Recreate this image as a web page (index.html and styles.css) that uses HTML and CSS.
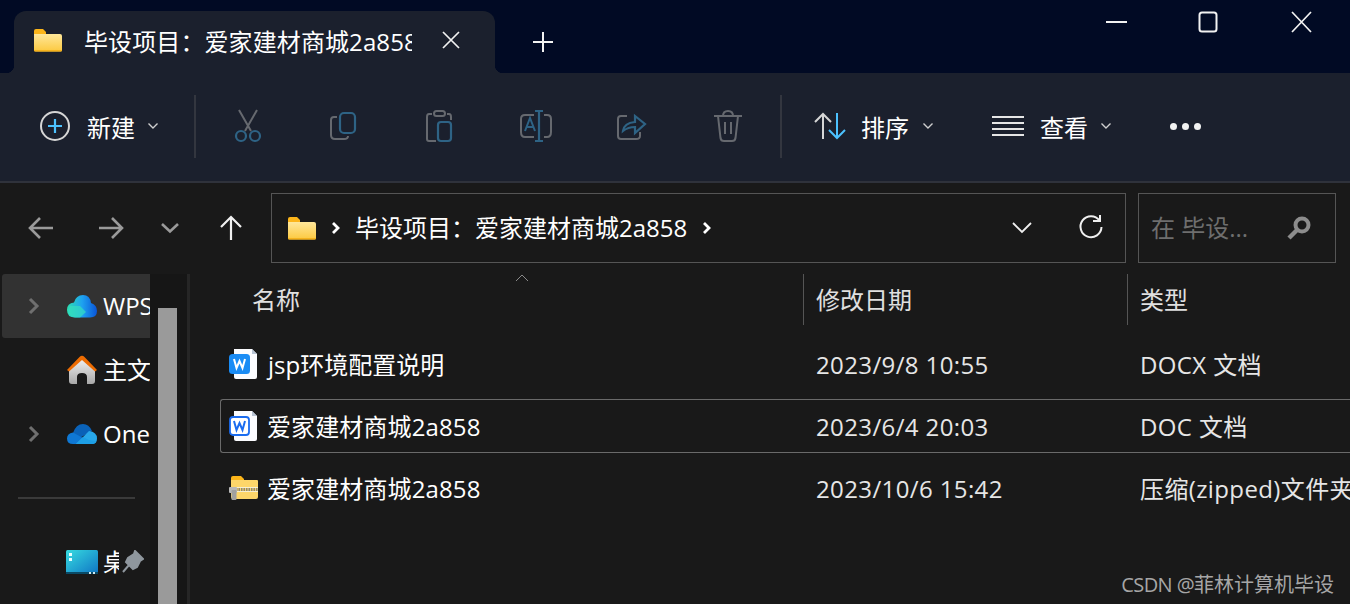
FILE: index.html
```html
<!DOCTYPE html>
<html lang="zh-CN">
<head>
<meta charset="utf-8">
<title>毕设项目</title>
<link rel="stylesheet" href="styles.css">
</head>
<body>
<div class="window">
  <header class="titlebar">
    <div class="tab">
      <svg class="tab-folder" width="30" height="24" viewBox="0 0 30 24"><use href="#folder"/></svg>
      <span class="tab-title">毕设项目：爱家建材商城2a858</span>
      <svg class="tab-close" width="20" height="20" viewBox="0 0 20 20"><path d="M2 2L18 18M18 2L2 18" stroke="#f2f2f2" stroke-width="1.7" fill="none"/></svg>
    </div>
    <svg class="tab-new" width="22" height="22" viewBox="0 0 22 22"><path d="M11 1V21M1 11H21" stroke="#f2f2f2" stroke-width="2" fill="none"/></svg>
    <div class="win-controls">
      <svg width="22" height="22" viewBox="0 0 22 22"><path d="M1 11H22" stroke="#f2f2f2" stroke-width="2"/></svg>
      <svg width="20" height="22" viewBox="0 0 20 22"><rect x="1.5" y="1.5" width="17" height="19" rx="2.5" stroke="#f2f2f2" stroke-width="2" fill="none"/></svg>
      <svg class="win-close" width="22" height="22" viewBox="0 0 22 22"><path d="M2 1L21 21M21 1L2 21" stroke="#f2f2f2" stroke-width="1.7" fill="none"/></svg>
    </div>
  </header>

  <div class="toolbar">
    <div class="tb-new">
      <svg width="32" height="32" viewBox="0 0 32 32"><circle cx="15" cy="16" r="14" stroke="#d6d6d6" stroke-width="2" fill="none"/><path d="M15 9V23M8 16H22" stroke="#4cc2ff" stroke-width="2.2"/></svg>
      <span class="tb-label">新建</span>
      <svg class="chev" width="12" height="8" viewBox="0 0 12 8"><path d="M1.5 1.5L6 6L10.5 1.5" stroke="#cfcfcf" stroke-width="1.4" fill="none"/></svg>
    </div>
    <div class="tb-sep"></div>
    <div class="tb-icons">
      <div class="tb-icon"><svg width="32" height="36" viewBox="0 0 32 36"><path d="M7 2L19 23M25 2L13 23" stroke="#66696f" stroke-width="2" fill="none"/><circle cx="9" cy="28" r="5" stroke="#2e6385" stroke-width="2.2" fill="none"/><circle cx="23" cy="28" r="5" stroke="#2e6385" stroke-width="2.2" fill="none"/></svg></div>
      <div class="tb-icon"><svg width="30" height="30" viewBox="0 0 30 30"><path d="M8 6H5Q2 6 2 9V24Q2 28 6 28H15Q19 28 19 25" stroke="#66696f" stroke-width="2" fill="none"/><rect x="11" y="2" width="15" height="20" rx="4" stroke="#2e6385" stroke-width="2.2" fill="none"/></svg></div>
      <div class="tb-icon"><svg width="30" height="34" viewBox="0 0 30 34"><path d="M7 5H4Q2 5 2 8V30Q2 32 4 32H11M22 5H24Q26 5 26 8V11" stroke="#66696f" stroke-width="2" fill="none"/><rect x="9" y="2" width="11" height="5" rx="2.5" stroke="#66696f" stroke-width="2" fill="none"/><rect x="13" y="13" width="13" height="19" rx="3" stroke="#2e6385" stroke-width="2.2" fill="none"/></svg></div>
      <div class="tb-icon"><svg width="34" height="34" viewBox="0 0 34 34"><path d="M15 6H6Q2 6 2 10V23Q2 28 6 28H15M25 6H28Q32 6 32 10V23Q32 28 28 28H25" stroke="#66696f" stroke-width="2" fill="none"/><path d="M16 2H24M20 2V32M16 32H24" stroke="#2e6385" stroke-width="2.2" fill="none"/><path d="M6 22L11 9L16 22M8 18H14" stroke="#2e6385" stroke-width="2" fill="none"/></svg></div>
      <div class="tb-icon"><svg width="32" height="30" viewBox="0 0 32 30"><path d="M11 5H5Q2 5 2 8V25Q2 28 5 28H20Q24 28 24 25V21" stroke="#66696f" stroke-width="2" fill="none"/><path d="M7 20Q8 12 19 11V5L29 13L19 22V16Q12 16 7 20Z" stroke="#2e6385" stroke-width="2.2" fill="none"/></svg></div>
      <div class="tb-icon"><svg width="30" height="34" viewBox="0 0 30 34"><path d="M1 7H29M5 7L7.500 29Q8 32 11 32H19Q22 32 22.500 29L25 7M10 7Q10 2 15 2Q20 2 20 7M12 13V25M18 13V25" stroke="#66696f" stroke-width="2" fill="none"/></svg></div>
    </div>
    <div class="tb-sep tb-sep-2"></div>
    <div class="tb-sort">
      <svg width="34" height="28" viewBox="0 0 34 28"><path d="M10 27V2M2 10L10 2L18 10" stroke="#d6d6d6" stroke-width="2" fill="none"/><path d="M24 1V26M16 18L24 26L32 18" stroke="#4cc2ff" stroke-width="2" fill="none"/></svg>
      <span class="tb-label">排序</span>
      <svg class="chev" width="12" height="8" viewBox="0 0 12 8"><path d="M1.5 1.5L6 6L10.5 1.5" stroke="#cfcfcf" stroke-width="1.4" fill="none"/></svg>
    </div>
    <div class="tb-view">
      <svg width="32" height="22" viewBox="0 0 32 22"><path d="M0 2H32M0 8H32M0 14H32M0 20H32" stroke="#e6e6e6" stroke-width="1.8"/></svg>
      <span class="tb-label">查看</span>
      <svg class="chev" width="12" height="8" viewBox="0 0 12 8"><path d="M1.5 1.5L6 6L10.5 1.5" stroke="#cfcfcf" stroke-width="1.4" fill="none"/></svg>
    </div>
    <div class="tb-more"><i></i><i></i><i></i></div>
  </div>

  <div class="addressbar">
    <div class="nav-btns">
      <svg width="26" height="24" viewBox="0 0 26 24"><path d="M25 12H2M12 2L2 12L12 22" stroke="#9a9a9a" stroke-width="2.6" fill="none"/></svg>
      <svg class="nav-fwd" width="26" height="24" viewBox="0 0 26 24"><path d="M1 12H24M14 2L24 12L14 22" stroke="#9a9a9a" stroke-width="2.6" fill="none"/></svg>
      <svg class="nav-drop" width="20" height="12" viewBox="0 0 20 12"><path d="M2 2L10 9.500L18 2" stroke="#9a9a9a" stroke-width="2.600" fill="none"/></svg>
      <svg class="nav-up" width="24" height="26" viewBox="0 0 24 26"><path d="M12 25V2M2 12L12 2L22 12" stroke="#f0f0f0" stroke-width="2.200" fill="none"/></svg>
    </div>
    <div class="addr-box">
      <svg width="30" height="24" viewBox="0 0 30 24"><use href="#folder"/></svg>
      <svg class="crumb crumb-a" width="10" height="14" viewBox="0 0 10 14"><path d="M2 2L7 7L2 12" stroke="#fff" stroke-width="2.800" fill="none"/></svg>
      <span class="addr-text">毕设项目：爱家建材商城2a858</span>
      <svg class="crumb crumb-b" width="10" height="14" viewBox="0 0 10 14"><path d="M2 2L7 7L2 12" stroke="#fff" stroke-width="2.800" fill="none"/></svg>
      <svg class="addr-drop" width="22" height="14" viewBox="0 0 22 14"><path d="M2 2L11 11L20 2" stroke="#f0f0f0" stroke-width="1.800" fill="none"/></svg>
      <svg class="addr-refresh" width="26" height="26" viewBox="0 0 26 26"><path d="M21.500 6.500A10.500 10.500 0 1 0 23.500 13" stroke="#f0f0f0" stroke-width="2" fill="none"/><path d="M15 7H22V1" stroke="#f0f0f0" stroke-width="2" fill="none"/></svg>
    </div>
    <div class="search-box">
      <span class="search-text">在 毕设...</span>
      <svg width="26" height="26" viewBox="0 0 26 26"><circle cx="16" cy="10" r="6.500" stroke="#8c8c8c" stroke-width="4" fill="none"/><path d="M11 15L3 23" stroke="#8c8c8c" stroke-width="4.500"/></svg>
    </div>
  </div>

  <div class="body">
    <nav class="sidebar">
      <div class="side-row side-row-active">
        <svg class="side-chev" width="12" height="18" viewBox="0 0 12 18"><path d="M2 2L9 9L2 16" stroke="#6f6f6f" stroke-width="3" fill="none"/></svg>
        <svg class="side-icon" width="32" height="24" viewBox="0 0 32 24"><use href="#wps"/></svg>
        <span class="side-text">WPS云盘</span>
      </div>
      <div class="side-row">
        <span class="side-chev-gap"></span>
        <svg class="side-icon" width="32" height="32" viewBox="0 0 32 32"><use href="#home"/></svg>
        <span class="side-text">主文件夹</span>
      </div>
      <div class="side-row">
        <svg class="side-chev" width="12" height="18" viewBox="0 0 12 18"><path d="M2 2L9 9L2 16" stroke="#6f6f6f" stroke-width="3" fill="none"/></svg>
        <svg class="side-icon" width="32" height="22" viewBox="0 0 32 22"><use href="#onedrive"/></svg>
        <span class="side-text">OneDrive</span>
      </div>
      <div class="side-divider"></div>
      <div class="side-row side-row-pin">
        <span class="side-chev-gap"></span>
        <svg class="side-icon" width="32" height="24" viewBox="0 0 32 24"><use href="#desktop"/></svg>
        <span class="side-text side-text-pin">桌面</span>
        <svg class="pin" width="22" height="24" viewBox="0 0 22 24"><path d="M13 1L21 9L18 11L15 17L11 19L4 12L6 8L12 4ZM7 15L1 22" fill="#8f979e" stroke="#8f979e" stroke-width="2"/></svg>
      </div>
    </nav>
    <div class="scrolltrack"><div class="scrollthumb"></div></div>
    <main class="files">
      <div class="file-head">
        <div class="head-name">名称<svg class="sort-caret" width="14" height="8" viewBox="0 0 14 8"><path d="M1 7L7 1L13 7" stroke="#8a8a8a" stroke-width="1" fill="none"/></svg></div>
        <div class="head-col">修改日期</div>
        <div class="head-col">类型</div>
      </div>
      <div class="file-row">
        <div class="file-name file-name-j"><svg width="28" height="32" viewBox="0 0 28 32"><use href="#doc"/></svg><span>jsp环境配置说明</span></div>
        <div class="file-cell">2023/9/8 10:55</div>
        <div class="file-cell">DOCX 文档</div>
      </div>
      <div class="file-row file-row-selected">
        <div class="file-name"><svg width="28" height="32" viewBox="0 0 28 32"><use href="#doc2"/></svg><span>爱家建材商城2a858</span></div>
        <div class="file-cell">2023/6/4 20:03</div>
        <div class="file-cell">DOC 文档</div>
      </div>
      <div class="file-row">
        <div class="file-name file-name-zip"><svg width="30" height="26" viewBox="0 0 30 26"><use href="#zip"/></svg><span>爱家建材商城2a858</span></div>
        <div class="file-cell">2023/10/6 15:42</div>
        <div class="file-cell">压缩(zipped)文件夹</div>
      </div>
      <div class="watermark"><span class="watermark-latin">CSDN @</span>菲林计算机毕设</div>
    </main>
  </div>
</div>

<svg class="defs" width="0" height="0">
  <defs>
    <linearGradient id="fg" x1="0" y1="0" x2="0" y2="1"><stop offset="0" stop-color="#ffe79a"/><stop offset="1" stop-color="#fcc93f"/></linearGradient>
    <linearGradient id="wg" x1="0" y1="0.500" x2="1" y2="0.500"><stop offset="0" stop-color="#2ce0b0"/><stop offset="0.500" stop-color="#1ea2f0"/><stop offset="1" stop-color="#0a55d8"/></linearGradient>
    <linearGradient id="hg" x1="0" y1="0" x2="0" y2="1"><stop offset="0" stop-color="#f0f0f0"/><stop offset="1" stop-color="#a8a8a8"/></linearGradient>
    <linearGradient id="dg" x1="0" y1="0" x2="1" y2="1"><stop offset="0" stop-color="#36dbe0"/><stop offset="1" stop-color="#0f74c4"/></linearGradient>
    <symbol id="folder" viewBox="0 0 30 24">
      <path d="M1 3Q1 1 3 1H10L13 4V8H1Z" fill="#fcb51a"/>
      <path d="M1 6H27Q29 6 29 8V22Q29 23.500 27.500 23.500H2.500Q1 23.500 1 22Z" fill="url(#fg)"/>
      <path d="M1 22H29V22.500Q29 23.500 27.500 23.500H2.500Q1 23.500 1 22.500Z" fill="#f5b21c"/>
    </symbol>
    <symbol id="wps" viewBox="0 0 32 24">
      <path d="M9 23.500Q1 23.500 1 16Q1 9 8 8.500Q10 1 17 1Q24 1 25 9Q31 11 31 17Q31 23.500 24 23.500Z" fill="url(#wg)"/>
      <path d="M4 12L14 12L20 18L14 23.500H9Q4 23 2 18Z" fill="#35e0c0" opacity="0.700"/>
    </symbol>
    <symbol id="home" viewBox="0 0 32 32">
      <path d="M3 16L16 5L29 16V27Q29 30 26 30H21V23Q21 19 16 19Q11 19 11 23V30H6Q3 30 3 27Z" fill="url(#hg)"/>
      <path d="M1 16L13.500 3Q16 0.500 18.500 3L31 16L29 17.500L16 6L3 17.500Z" fill="#ed6c02"/>
    </symbol>
    <symbol id="onedrive" viewBox="0 0 32 22">
      <path d="M7 10Q10 1 17 1Q23 1 26 8L12 16L5 11Z" fill="#0a62b8"/>
      <path d="M7 21Q1 21 1 15.500Q1 10.500 7 9.500L17 15L11 21Z" fill="#0f78d4"/>
      <path d="M10 21L23 8Q31 9 31 15.500Q31 21 26 21Z" fill="#28a8ea"/>
      <path d="M10 21L17 14L23 17L30 18Q29 21 26 21Z" fill="#1d9fe6"/>
    </symbol>
    <symbol id="desktop" viewBox="0 0 32 24">
      <rect x="0" y="0" width="32" height="24" rx="1.500" fill="url(#dg)"/>
      <rect x="0" y="22" width="32" height="2" fill="#0a4a66"/>
      <rect x="3" y="3" width="3" height="3" fill="#e8ffff"/>
      <rect x="3" y="8" width="3" height="3" fill="#e8ffff"/>
      <rect x="23" y="22" width="2" height="2" fill="#d0e8f0"/>
      <rect x="27" y="22" width="2" height="2" fill="#d0e8f0"/>
    </symbol>
    <symbol id="doc" viewBox="0 0 28 32">
      <path d="M5 1H23L28 6V29Q28 31 26 31H7Q5 31 5 29Z" fill="#fbfcff"/>
      <path d="M23 1L28 6H23Z" fill="#b8c4d4"/>
      <rect x="0" y="6" width="21" height="20" rx="3.500" fill="#1a8cf5"/>
      <path d="M5 11L7.500 20L10.500 13L13.500 20L16 11" stroke="#fff" stroke-width="2" fill="none"/>
    </symbol>
    <symbol id="doc2" viewBox="0 0 28 32">
      <path d="M5 1H23L28 6V29Q28 31 26 31H7Q5 31 5 29Z" fill="#fbfcff"/>
      <path d="M23 1L28 6H23Z" fill="#b8c4d4"/>
      <rect x="1" y="7" width="19" height="18" rx="3" fill="#fff" stroke="#1a6cf0" stroke-width="1.800"/>
      <path d="M5 11L7.500 20L10.500 13L13.500 20L16 11" stroke="#1a6cf0" stroke-width="2" fill="none"/>
    </symbol>
    <symbol id="zip" viewBox="0 0 30 26">
      <path d="M2 3Q2 1 4 1H12L15 4V8H2Z" fill="#fcb51a"/>
      <path d="M2 5H28Q29 5 29 6V22Q29 24 27 24H4Q2 24 2 22Z" fill="#fdd66a"/>
      <path d="M2 14.500H29" stroke="#8f8a78" stroke-width="3" stroke-dasharray="1.500 1"/>
      <path d="M2 12.500H29M2 16.500H29" stroke="#f6efd2" stroke-width="1"/>
      <rect x="0" y="12" width="8" height="6" rx="1" fill="#b8b8b8"/>
      <rect x="2.500" y="15" width="5" height="10" rx="1" fill="#a0a0a0"/>
    </symbol>
  </defs>
</svg>
</body>
</html>
```
FILE: styles.css
```css
* { box-sizing: border-box; }
html, body { margin: 0; padding: 0; height: 100%; overflow: hidden; background: #191919; }
body { font-family: "Open Sans", "Noto Sans CJK SC", sans-serif; color: #fff; }
svg { display: block; flex: none; }
.defs { position: absolute; }
.window { width: 1350px; height: 604px; display: flex; flex-direction: column; overflow: hidden; }

.titlebar { height: 73px; flex: none; background: #010a24; display: flex; align-items: flex-start; }
.tab { position: relative; width: 481px; height: 62px; margin: 11px 0 0 14px; background: #1b202d; border-radius: 12px 12px 0 0; display: flex; align-items: center; padding: 0 0 1px 19px; }
.tab::before, .tab::after { content: ""; position: absolute; bottom: 0; width: 8px; height: 8px; }
.tab::before { left: -8px; background: radial-gradient(circle at 0 0, transparent 8px, #1b202d 8.500px); }
.tab::after { right: -8px; background: radial-gradient(circle at 100% 0, transparent 8px, #1b202d 8.500px); }
.tab-folder { margin-bottom: 3px; }
.tab-title { width: 328px; margin-left: 21px; white-space: nowrap; overflow: hidden; font-size: 24px; line-height: 32px; letter-spacing: 0.1px; }
.tab-close { margin: -3px 0 0 29px; }
.tab-new { margin: 31px 0 0 37px; }
.win-controls { margin-left: auto; display: flex; gap: 71px; align-items: center; padding: 11px 38px 0 0; }
.win-close { margin-left: 1px; }

.toolbar { height: 110px; flex: none; background: #1b202d; border-bottom: 2px solid #2f323b; display: flex; align-items: center; padding: 0 0 2px 40px; }
.tb-new { width: 155px; margin-right: -1px; display: flex; align-items: center; }
.tb-label { font-size: 24px; line-height: 32px; white-space: nowrap; margin-top: 3px; }
.tb-new .tb-label { margin-left: 15px; }
.chev { margin-left: 12px; }
.tb-sep { width: 2px; height: 63px; background: #33363f; }
.tb-icons { display: flex; margin-left: 4px; }
.tb-icon { width: 96px; display: flex; justify-content: center; align-items: center; }
.tb-sep-2 { margin-left: 4px; }
.tb-sort { margin-left: 31px; display: flex; align-items: center; }
.tb-sort .tb-label { margin-left: 14px; }
.tb-sort .chev { margin-left: 13px; }
.tb-view { margin-left: 58px; display: flex; align-items: center; }
.tb-view .tb-label { margin-left: 16px; }
.tb-more { margin-left: 58px; display: flex; gap: 5px; }
.tb-more i { width: 7px; height: 7px; border-radius: 50%; background: #f2f2f2; }

.addressbar { height: 91px; flex: none; display: flex; align-items: flex-start; padding-top: 10px; }
.nav-btns { width: 271px; height: 70px; display: flex; align-items: center; padding-left: 28px; }
.nav-fwd { margin-left: 44px; }
.nav-drop { margin-left: 36px; }
.nav-up { margin-left: 39px; }
.addr-box { width: 855px; height: 70px; border: 1px solid #555; display: flex; align-items: center; padding-left: 15px; }
.crumb-a { margin-left: 14px; }
.addr-text { margin-left: 14px; font-size: 24px; line-height: 32px; white-space: nowrap; }
.crumb-b { margin-left: 15px; }
.addr-drop { margin-left: auto; }
.addr-refresh { margin: 0 21px 2px 45px; }
.search-box { width: 198px; height: 70px; margin-left: 12px; border: 1px solid #555; display: flex; align-items: center; padding: 0 23px 0 12px; justify-content: space-between; }
.search-text { font-size: 24px; line-height: 32px; color: #6e6e6e; white-space: nowrap; }

.body { flex: 1; min-height: 0; display: flex; }
.sidebar { width: 150px; flex: none; padding-left: 2px; overflow: hidden; display: flex; flex-direction: column; }
.side-row { width: 148px; height: 64px; flex: none; display: flex; align-items: center; padding-left: 26px; overflow: hidden; }
.side-row-active { background: #323232; border-radius: 3px 0 0 3px; }
.side-chev { width: 12px; margin-right: 26px; }
.side-chev-gap { width: 12px; margin-right: 26px; flex: none; }
.side-icon { margin-right: 5px; }
.side-text { font-size: 24px; line-height: 32px; white-space: nowrap; }
.side-divider { width: 117px; height: 2px; margin: 31px 0 0 16px; background: #3a3a3a; flex: none; }
.side-row-pin { margin-top: 31px; }
.side-text-pin { width: 16px; overflow: hidden; }
.pin { margin-left: 3px; }

.scrolltrack { width: 40px; flex: none; padding: 34px 0 0 8px; background: #161616; border-right: 3px solid #262626; }
.scrollthumb { width: 19px; height: 100%; background: #9a9a9a; }

.files { position: relative; flex: 1; min-width: 0; padding-left: 30px; }
.file-head { height: 63px; display: grid; grid-template-columns: 583px 324px 1fr; align-items: start; }
.head-name, .head-col { height: 51px; font-size: 24px; line-height: 32px; padding-top: 10px; color: #e0e0e0; white-space: nowrap; }
.head-name { position: relative; padding-left: 32px; }
.head-col { border-left: 1px solid #555; padding-left: 12px; }
.sort-caret { position: absolute; left: 295px; top: 0; }
.file-row { height: 54px; margin-bottom: 8px; display: grid; grid-template-columns: 583px 324px 1fr; align-items: center; border: 1px solid transparent; border-right: 0; border-radius: 3px 0 0 3px; }
.file-row-selected { border-color: #6a6a6a; }
.file-name { display: flex; align-items: center; padding-left: 8px; }
.file-name svg { margin-right: 10px; }
.file-name-j svg { margin-right: 11px; }
.file-name-zip svg { margin-right: 8px; }
.file-name span, .file-cell { font-size: 24px; line-height: 32px; white-space: nowrap; padding-top: 1px; letter-spacing: 0.12px; }
.file-name-j span { letter-spacing: 0; }
.file-cell { padding-left: 12px; color: #e6e6e6; letter-spacing: 0.38px; }
.watermark { position: absolute; right: 16px; bottom: 7px; font-size: 20px; line-height: 24px; color: #a6a6a6; white-space: nowrap; }
.watermark-latin { letter-spacing: -0.6px; }
```
